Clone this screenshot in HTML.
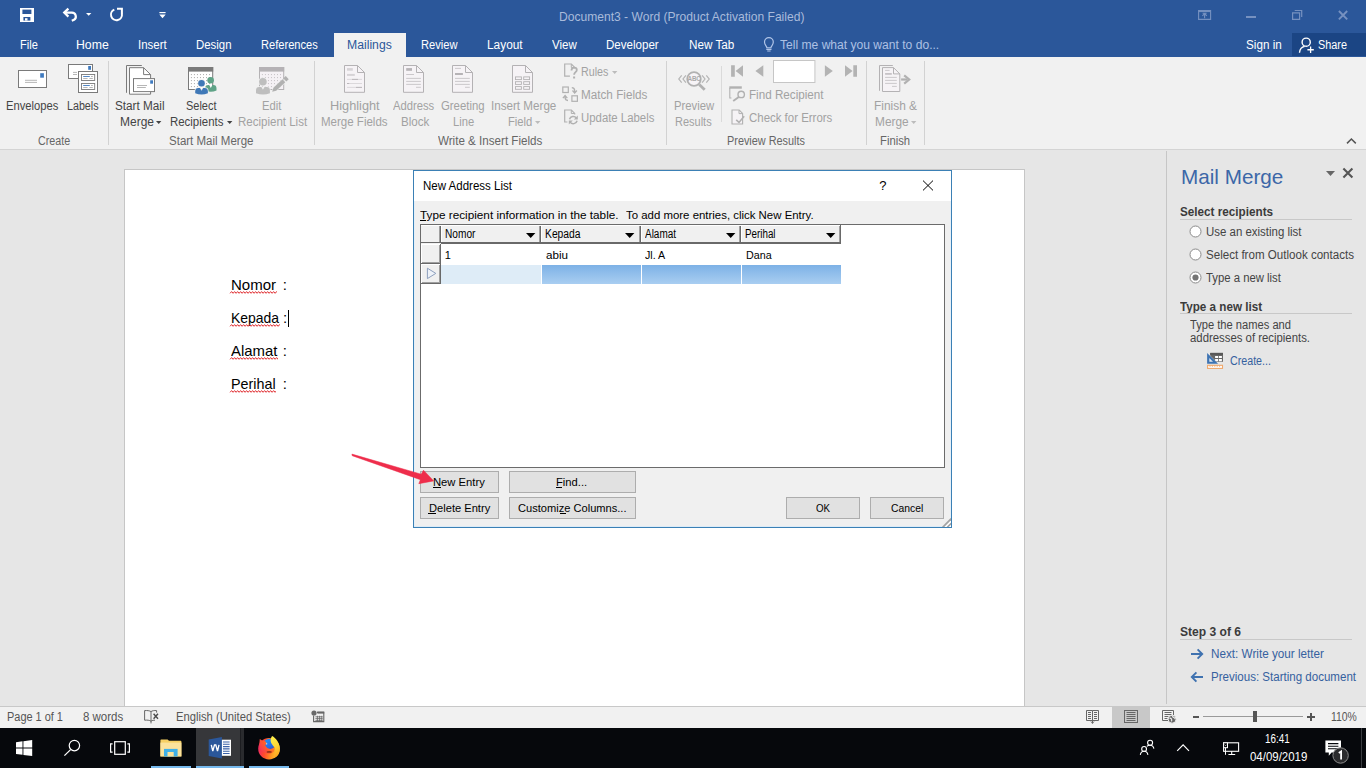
<!DOCTYPE html>
<html><head><meta charset="utf-8"><title>Word</title>
<style>
html,body{margin:0;padding:0;}
body{width:1366px;height:768px;overflow:hidden;position:relative;background:#e6e6e6;font-family:"Liberation Sans",sans-serif;}
.b{position:absolute;display:block;}
.t{position:absolute;white-space:pre;line-height:1;transform-origin:0 0;font-family:"Liberation Sans",sans-serif;}
</style></head><body>
<!-- p_chrome -->
<div class="b" style="left:0px;top:0px;width:1366px;height:57px;background:#2b579a;"></div>
<div class="b" style="left:0px;top:57px;width:1366px;height:92px;background:#f1f1f1;"></div>
<div class="b" style="left:0px;top:149px;width:1366px;height:1px;background:#d4d4d4;"></div>
<div class="b" style="left:334px;top:33px;width:72px;height:24px;background:#f1f1f1;"></div>
<div class="b" style="left:1292px;top:33px;width:74px;height:23px;background:#1b4584;"></div>
<div class="t" style="left:20.00px;top:39px;font-size:12px;color:#ffffff;transform:scaleX(0.9209);">File</div>
<div class="t" style="left:76.20px;top:39px;font-size:12px;color:#ffffff;transform:scaleX(1.0235);">Home</div>
<div class="t" style="left:138.00px;top:39px;font-size:12px;color:#ffffff;transform:scaleX(0.9565);">Insert</div>
<div class="t" style="left:196.00px;top:39px;font-size:12px;color:#ffffff;transform:scaleX(0.9510);">Design</div>
<div class="t" style="left:261.30px;top:39px;font-size:12px;color:#ffffff;transform:scaleX(0.9245);">References</div>
<div class="t" style="left:421.30px;top:39px;font-size:12px;color:#ffffff;transform:scaleX(0.9292);">Review</div>
<div class="t" style="left:487.30px;top:39px;font-size:12px;color:#ffffff;transform:scaleX(0.9888);">Layout</div>
<div class="t" style="left:552.00px;top:39px;font-size:12px;color:#ffffff;transform:scaleX(0.9605);">View</div>
<div class="t" style="left:606.30px;top:39px;font-size:12px;color:#ffffff;transform:scaleX(0.9629);">Developer</div>
<div class="t" style="left:688.70px;top:39px;font-size:12px;color:#ffffff;transform:scaleX(0.9751);">New Tab</div>
<div class="t" style="left:1245.80px;top:39px;font-size:12px;color:#ffffff;transform:scaleX(0.9746);">Sign in</div>
<div class="t" style="left:1318.00px;top:39px;font-size:12px;color:#ffffff;transform:scaleX(0.9048);">Share</div>
<div class="t" style="left:347.40px;top:39px;font-size:12px;color:#2b579a;transform:scaleX(1.0172);">Mailings</div>
<div class="t" style="left:780.30px;top:39px;font-size:12px;color:#adc1e4;transform:scaleX(1.0072);">Tell me what you want to do...</div>
<div class="t" style="left:558.60px;top:10px;font-size:13px;color:#a9bbdb;transform:scaleX(0.9289);">Document3 - Word (Product Activation Failed)</div>
<svg class="b" style="left:762px;top:36px;" width="14" height="16" viewBox="762 36 14 16"><path d="M766.900 47.900c0-1.700-2.400-2.700-2.400-5.800a4.400 4.400 0 0 1 8.800 0c0 3.100-2.400 4.100-2.400 5.800z" fill="none" stroke="#b1c5e8" stroke-width="1.200"/><path d="M766.300 49.500h5.200M767.200 51h3.400" stroke="#b1c5e8" stroke-width="1.100"/></svg>
<svg class="b" style="left:20px;top:8px;" width="14" height="14" viewBox="0 0 14 14"><path d="M0 0h14v14H0z" fill="#fff"/><path d="M2.4 1.6h9v4.4h-9z" fill="#2b579a"/><path d="M3.4 9h7v3.6h-7z" fill="#2b579a"/><path d="M5 10.2h2.5v2.4H5z" fill="#fff"/></svg>
<svg class="b" style="left:62px;top:6px;" width="17" height="17" viewBox="0 0 17 17"><path d="M2.4 6.6h7.6a3.9 3.9 0 0 1 2 7.2l-2.2 1" fill="none" stroke="#fff" stroke-width="2.2"/><path d="M6.4 2.6L2.2 6.6l4.2 4" fill="none" stroke="#fff" stroke-width="2.2"/></svg>
<svg class="b" style="left:86px;top:13px;" width="6" height="4" viewBox="0 0 6 4"><path d="M0 0h5.4L2.7 2.8z" fill="#fff"/></svg>
<svg class="b" style="left:108px;top:6px;" width="17" height="17" viewBox="0 0 17 17"><path d="M13.9 7.8A5.5 5.5 0 1 1 6.3 3.6" fill="none" stroke="#fff" stroke-width="2"/><path d="M9 2.8h4.9v5.2" fill="none" stroke="#fff" stroke-width="2"/></svg>
<svg class="b" style="left:159px;top:12px;" width="7" height="8" viewBox="0 0 7 8"><path d="M0.4 0.6h6.2" stroke="#fff" stroke-width="1.2"/><path d="M0.3 2.6h6.4L3.5 6.2z" fill="#fff"/></svg>
<svg class="b" style="left:1197px;top:9px;" width="15" height="12" viewBox="1197 9 15 12"><path d="M1198.600 10.600h12v8.800h-12z" fill="none" stroke="#7691c0" stroke-width="1.100"/><path d="M1198.600 11.200h12" stroke="#7691c0" stroke-width="1.800"/><path d="M1204.600 18.200v-4.200M1202.400 15.800l2.200-2.200 2.200 2.200M1202.600 13.300h4" fill="none" stroke="#7691c0" stroke-width="1.100"/></svg>
<div class="b" style="left:1246px;top:16px;width:10px;height:2px;background:#7691c0;"></div>
<svg class="b" style="left:1291px;top:9px;" width="13" height="12" viewBox="1291 9 13 12"><path d="M1294.700 10.500h7v6.600" fill="none" stroke="#7691c0" stroke-width="1.200"/><path d="M1292.600 12.800h7v6.600h-7z" fill="none" stroke="#7691c0" stroke-width="1.200"/></svg>
<svg class="b" style="left:1337px;top:9px;" width="13" height="12" viewBox="1337 9 13 12"><path d="M1338.900 11l8.300 8.400M1347.200 11l-8.300 8.400" stroke="#7691c0" stroke-width="1.900"/></svg>
<svg class="b" style="left:1297px;top:36px;" width="19" height="19" viewBox="1297 36 19 19"><circle cx="1306.200" cy="42.200" r="4.100" fill="none" stroke="#fff" stroke-width="1.400"/><path d="M1299.500 52.700c.3-3.500 2.300-5.700 5.200-6.300" fill="none" stroke="#fff" stroke-width="1.400"/><path d="M1310.600 46.600v6.300M1307.400 49.750h6.400" stroke="#fff" stroke-width="1.300"/></svg>
<!-- p_ribbon -->
<div class="b" style="left:108px;top:61px;width:1px;height:84px;background:#d2d2d2;"></div>
<div class="b" style="left:314px;top:61px;width:1px;height:84px;background:#d2d2d2;"></div>
<div class="b" style="left:666px;top:61px;width:1px;height:84px;background:#d2d2d2;"></div>
<div class="b" style="left:866px;top:61px;width:1px;height:84px;background:#d2d2d2;"></div>
<div class="b" style="left:924px;top:61px;width:1px;height:84px;background:#d2d2d2;"></div>
<div class="b" style="left:721px;top:66px;width:1px;height:56px;background:#dadada;"></div>
<div class="t" style="left:6.30px;top:100px;font-size:12px;color:#444444;transform:scaleX(0.9331);">Envelopes</div>
<div class="t" style="left:66.80px;top:100px;font-size:12px;color:#444444;transform:scaleX(0.8922);">Labels</div>
<div class="t" style="left:115.20px;top:100px;font-size:12px;color:#444444;transform:scaleX(0.9773);">Start Mail</div>
<div class="t" style="left:119.50px;top:116px;font-size:12px;color:#444444;transform:scaleX(0.9981);">Merge</div>
<div class="t" style="left:186.20px;top:100px;font-size:12px;color:#444444;transform:scaleX(0.9140);">Select</div>
<div class="t" style="left:170.30px;top:116px;font-size:12px;color:#444444;transform:scaleX(0.9528);">Recipients</div>
<div class="t" style="left:262.40px;top:100px;font-size:12px;color:#a2a2a2;transform:scaleX(0.9340);">Edit</div>
<div class="t" style="left:237.80px;top:116px;font-size:12px;color:#a2a2a2;transform:scaleX(0.9595);">Recipient List</div>
<div class="t" style="left:330.30px;top:100px;font-size:12px;color:#a2a2a2;transform:scaleX(1.0623);">Highlight</div>
<div class="t" style="left:321.40px;top:116px;font-size:12px;color:#a2a2a2;transform:scaleX(0.9601);">Merge Fields</div>
<div class="t" style="left:393.40px;top:100px;font-size:12px;color:#a2a2a2;transform:scaleX(0.9353);">Address</div>
<div class="t" style="left:400.70px;top:116px;font-size:12px;color:#a2a2a2;transform:scaleX(0.9654);">Block</div>
<div class="t" style="left:440.60px;top:100px;font-size:12px;color:#a2a2a2;transform:scaleX(0.9460);">Greeting</div>
<div class="t" style="left:452.70px;top:116px;font-size:12px;color:#a2a2a2;transform:scaleX(0.9347);">Line</div>
<div class="t" style="left:490.70px;top:100px;font-size:12px;color:#a2a2a2;transform:scaleX(0.9699);">Insert Merge</div>
<div class="t" style="left:507.70px;top:116px;font-size:12px;color:#a2a2a2;transform:scaleX(0.9368);">Field</div>
<div class="t" style="left:673.60px;top:100px;font-size:12px;color:#a2a2a2;transform:scaleX(0.9408);">Preview</div>
<div class="t" style="left:675.40px;top:116px;font-size:12px;color:#a2a2a2;transform:scaleX(0.9158);">Results</div>
<div class="t" style="left:873.50px;top:100px;font-size:12px;color:#a2a2a2;transform:scaleX(0.9923);">Finish &amp;</div>
<div class="t" style="left:874.60px;top:116px;font-size:12px;color:#a2a2a2;transform:scaleX(0.9893);">Merge</div>
<svg class="b" style="left:155.8px;top:120.5px;" width="6" height="4" viewBox="0 0 6 4"><path d="M0 0h5.4L2.7 2.9z" fill="#444444"/></svg>
<svg class="b" style="left:226.7px;top:120.5px;" width="6" height="4" viewBox="0 0 6 4"><path d="M0 0h5.4L2.7 2.9z" fill="#444444"/></svg>
<svg class="b" style="left:534.8px;top:120.5px;" width="6" height="4" viewBox="0 0 6 4"><path d="M0 0h5.4L2.7 2.9z" fill="#bcbcbc"/></svg>
<svg class="b" style="left:911px;top:120.5px;" width="6" height="4" viewBox="0 0 6 4"><path d="M0 0h5.4L2.7 2.9z" fill="#bcbcbc"/></svg>
<div class="t" style="left:581.40px;top:66px;font-size:12px;color:#a2a2a2;transform:scaleX(0.8917);">Rules</div>
<svg class="b" style="left:611.8px;top:70.5px;" width="6" height="4" viewBox="0 0 6 4"><path d="M0 0h5.4L2.7 2.9z" fill="#bcbcbc"/></svg>
<div class="t" style="left:581.40px;top:89px;font-size:12px;color:#a2a2a2;transform:scaleX(0.9757);">Match Fields</div>
<div class="t" style="left:581.40px;top:112px;font-size:12px;color:#a2a2a2;transform:scaleX(0.9483);">Update Labels</div>
<div class="t" style="left:748.50px;top:89px;font-size:12px;color:#a2a2a2;transform:scaleX(0.9713);">Find Recipient</div>
<div class="t" style="left:748.50px;top:112px;font-size:12px;color:#a2a2a2;transform:scaleX(0.9534);">Check for Errors</div>
<div class="t" style="left:37.50px;top:135px;font-size:12px;color:#666666;transform:scaleX(0.8913);">Create</div>
<div class="t" style="left:169.00px;top:135px;font-size:12px;color:#666666;transform:scaleX(0.9592);">Start Mail Merge</div>
<div class="t" style="left:438.10px;top:135px;font-size:12px;color:#666666;transform:scaleX(0.9678);">Write &amp; Insert Fields</div>
<div class="t" style="left:727.40px;top:135px;font-size:12px;color:#666666;transform:scaleX(0.9065);">Preview Results</div>
<div class="t" style="left:880.30px;top:135px;font-size:12px;color:#666666;transform:scaleX(0.9392);">Finish</div>
<svg class="b" style="left:1346px;top:137px;" width="11" height="8" viewBox="0 0 11 8"><path d="M1 6.4l4.4-4.4 4.4 4.4" fill="none" stroke="#555" stroke-width="1.5"/></svg>
<!-- p_ribicons -->
<svg class="b" style="left:0;top:57px" width="1366" height="92" viewBox="0 57 1366 92"><rect x="18.5" y="70.5" width="28" height="17" fill="#fff" stroke="#7a7a7a"/>
<rect x="40.2" y="73.2" width="3.7" height="4.5" fill="#3f7abf"/>
<path d="M25 80.3h12M25 82.4h12" stroke="#a3a3a3" stroke-width=".8"/>
<rect x="68.5" y="64.5" width="24" height="14" fill="#fff" stroke="#7a7a7a"/>
<rect x="88.2" y="66" width="2.8" height="3.8" fill="#3f7abf"/>
<path d="M73 72.4h4M73 74.5h4" stroke="#a3a3a3" stroke-width=".8"/>
<rect x="78.5" y="71.5" width="19" height="21" fill="#fff" stroke="#7a7a7a"/>
<rect x="81.5" y="74.5" width="13.2" height="6" fill="#fff" stroke="#7a7a7a" stroke-width=".9"/>
<path d="M83.2 76.5h6.6" stroke="#3f7abf" stroke-width=".9"/><path d="M91 76.5h1.8" stroke="#a3a3a3" stroke-width=".8"/>
<path d="M83.2 78.5h4.4M89.4 78.5h3.4" stroke="#a3a3a3" stroke-width=".8"/>
<rect x="81.5" y="83.5" width="13.2" height="6" fill="#fff" stroke="#7a7a7a" stroke-width=".9"/>
<path d="M83.2 85.5h6.6" stroke="#3f7abf" stroke-width=".9"/><path d="M91 85.5h1.8" stroke="#a3a3a3" stroke-width=".8"/>
<path d="M83.2 87.5h4.4M89.4 87.5h3.4" stroke="#a3a3a3" stroke-width=".8"/>
<path d="M141.8 65.5H126.5V92.8" fill="none" stroke="#7a7a7a"/>
<path d="M129.5 67.7H143.6L150.6 74.6V94.2H129.5z" fill="#fff" stroke="#7a7a7a"/>
<path d="M143.6 67.7V74.6H150.6" fill="none" stroke="#7a7a7a"/>
<rect x="133.5" y="78.6" width="21" height="13" fill="#fff" stroke="#7a7a7a"/>
<rect x="150.2" y="80.3" width="2.8" height="3.4" fill="#3f7abf"/>
<path d="M137 85.5h10M137 87.5h8.8" stroke="#a3a3a3" stroke-width=".8"/>
<rect x="188.5" y="67.5" width="24.2" height="22" fill="#fff" stroke="#7a7a7a"/><rect x="188.0" y="67.0" width="25.2" height="4.6" fill="#7a7a7a"/><rect x="190.90" y="74.10" width="1" height="1" fill="#a8a8a8"/><rect x="193.92" y="74.10" width="1" height="1" fill="#a8a8a8"/><rect x="196.94" y="74.10" width="1" height="1" fill="#a8a8a8"/><rect x="199.96" y="74.10" width="1" height="1" fill="#a8a8a8"/><rect x="202.98" y="74.10" width="1" height="1" fill="#a8a8a8"/><rect x="206.00" y="74.10" width="1" height="1" fill="#a8a8a8"/><rect x="209.02" y="74.10" width="1" height="1" fill="#a8a8a8"/><rect x="190.90" y="77.10" width="1" height="1" fill="#a8a8a8"/><rect x="193.92" y="77.10" width="1" height="1" fill="#a8a8a8"/><rect x="196.94" y="77.10" width="1" height="1" fill="#a8a8a8"/><rect x="199.96" y="77.10" width="1" height="1" fill="#a8a8a8"/><rect x="202.98" y="77.10" width="1" height="1" fill="#a8a8a8"/><rect x="206.00" y="77.10" width="1" height="1" fill="#a8a8a8"/><rect x="209.02" y="77.10" width="1" height="1" fill="#a8a8a8"/><rect x="190.90" y="80.10" width="1" height="1" fill="#a8a8a8"/><rect x="193.92" y="80.10" width="1" height="1" fill="#a8a8a8"/><rect x="196.94" y="80.10" width="1" height="1" fill="#a8a8a8"/><rect x="199.96" y="80.10" width="1" height="1" fill="#a8a8a8"/><rect x="202.98" y="80.10" width="1" height="1" fill="#a8a8a8"/><rect x="206.00" y="80.10" width="1" height="1" fill="#a8a8a8"/><rect x="209.02" y="80.10" width="1" height="1" fill="#a8a8a8"/><rect x="190.90" y="83.10" width="1" height="1" fill="#a8a8a8"/><rect x="193.92" y="83.10" width="1" height="1" fill="#a8a8a8"/><rect x="196.94" y="83.10" width="1" height="1" fill="#a8a8a8"/><rect x="199.96" y="83.10" width="1" height="1" fill="#a8a8a8"/><rect x="202.98" y="83.10" width="1" height="1" fill="#a8a8a8"/><rect x="206.00" y="83.10" width="1" height="1" fill="#a8a8a8"/><rect x="209.02" y="83.10" width="1" height="1" fill="#a8a8a8"/><rect x="190.90" y="86.10" width="1" height="1" fill="#a8a8a8"/><rect x="193.92" y="86.10" width="1" height="1" fill="#a8a8a8"/><rect x="196.94" y="86.10" width="1" height="1" fill="#a8a8a8"/><rect x="199.96" y="86.10" width="1" height="1" fill="#a8a8a8"/><rect x="202.98" y="86.10" width="1" height="1" fill="#a8a8a8"/><rect x="206.00" y="86.10" width="1" height="1" fill="#a8a8a8"/><rect x="209.02" y="86.10" width="1" height="1" fill="#a8a8a8"/>
<circle cx="210.6" cy="80.3" r="3.3" fill="#5fa387"/><path d="M205.1 90.5V88.5Q205.1 85.1 208.29999999999998 85.1H209.20000000000002L210.8 87.89999999999999L212.4 85.1H213.3Q216.5 85.1 216.5 88.5V90.5Q210.8 92.9 205.1 90.5z" fill="#5fa387"/>
<circle cx="201.5" cy="83.3" r="3.3" fill="#3f78b7" stroke="#f1f1f1" stroke-width="1.4" paint-order="stroke"/><path d="M195.2 93.2V91.4Q195.2 88 198.39999999999998 88H199.95000000000002L201.55 90.8L203.15 88H204.70000000000002Q207.9 88 207.9 91.4V93.2Q201.55 95.60000000000001 195.2 93.2z" fill="#3f78b7" stroke="#f1f1f1" stroke-width="1.4" paint-order="stroke"/>
<rect x="259.5" y="67.5" width="24.2" height="22" fill="#f5f1f5" stroke="#b4b2b4"/><rect x="259.0" y="67.0" width="25.2" height="4.6" fill="#b5b2b5"/><rect x="261.90" y="74.10" width="1" height="1" fill="#c4c0c4"/><rect x="264.92" y="74.10" width="1" height="1" fill="#c4c0c4"/><rect x="267.94" y="74.10" width="1" height="1" fill="#c4c0c4"/><rect x="270.96" y="74.10" width="1" height="1" fill="#c4c0c4"/><rect x="273.98" y="74.10" width="1" height="1" fill="#c4c0c4"/><rect x="277.00" y="74.10" width="1" height="1" fill="#c4c0c4"/><rect x="280.02" y="74.10" width="1" height="1" fill="#c4c0c4"/><rect x="261.90" y="77.10" width="1" height="1" fill="#c4c0c4"/><rect x="264.92" y="77.10" width="1" height="1" fill="#c4c0c4"/><rect x="267.94" y="77.10" width="1" height="1" fill="#c4c0c4"/><rect x="270.96" y="77.10" width="1" height="1" fill="#c4c0c4"/><rect x="273.98" y="77.10" width="1" height="1" fill="#c4c0c4"/><rect x="277.00" y="77.10" width="1" height="1" fill="#c4c0c4"/><rect x="280.02" y="77.10" width="1" height="1" fill="#c4c0c4"/><rect x="261.90" y="80.10" width="1" height="1" fill="#c4c0c4"/><rect x="264.92" y="80.10" width="1" height="1" fill="#c4c0c4"/><rect x="267.94" y="80.10" width="1" height="1" fill="#c4c0c4"/><rect x="270.96" y="80.10" width="1" height="1" fill="#c4c0c4"/><rect x="273.98" y="80.10" width="1" height="1" fill="#c4c0c4"/><rect x="277.00" y="80.10" width="1" height="1" fill="#c4c0c4"/><rect x="280.02" y="80.10" width="1" height="1" fill="#c4c0c4"/><rect x="261.90" y="83.10" width="1" height="1" fill="#c4c0c4"/><rect x="264.92" y="83.10" width="1" height="1" fill="#c4c0c4"/><rect x="267.94" y="83.10" width="1" height="1" fill="#c4c0c4"/><rect x="270.96" y="83.10" width="1" height="1" fill="#c4c0c4"/><rect x="273.98" y="83.10" width="1" height="1" fill="#c4c0c4"/><rect x="277.00" y="83.10" width="1" height="1" fill="#c4c0c4"/><rect x="280.02" y="83.10" width="1" height="1" fill="#c4c0c4"/><rect x="261.90" y="86.10" width="1" height="1" fill="#c4c0c4"/><rect x="264.92" y="86.10" width="1" height="1" fill="#c4c0c4"/><rect x="267.94" y="86.10" width="1" height="1" fill="#c4c0c4"/><rect x="270.96" y="86.10" width="1" height="1" fill="#c4c0c4"/><rect x="273.98" y="86.10" width="1" height="1" fill="#c4c0c4"/><rect x="277.00" y="86.10" width="1" height="1" fill="#c4c0c4"/><rect x="280.02" y="86.10" width="1" height="1" fill="#c4c0c4"/>
<circle cx="262.9" cy="81.8" r="3.8" fill="#bebebe" stroke="#f1f1f1" stroke-width="1.4" paint-order="stroke"/><path d="M256 93.2V90.30000000000001Q256 86.9 259.2 86.9H261.34999999999997L262.95 89.7L264.55 86.9H266.7Q269.9 86.9 269.9 90.30000000000001V93.2Q262.95 95.60000000000001 256 93.2z" fill="#bebebe" stroke="#f1f1f1" stroke-width="1.4" paint-order="stroke"/>
<g transform="translate(272.2 91.7) rotate(-43)"><path d="M0 0L3.6 -2H16V2H3.6z" fill="#b1b1b1" stroke="#f1f1f1" stroke-width="1" paint-order="stroke"/><path d="M17.2 -2.2h3.4v4.4h-3.4z" fill="#b1b1b1"/></g>
<path d="M344.5 65.5H357.5L364.5 72.5V92.3H344.5z" fill="#f6f3f6" stroke="#b4b2b4"/><path d="M357.5 65.5V72.5H364.5" fill="none" stroke="#b4b2b4"/>
<rect x="347" y="68.1" width="5.8" height="2.6" fill="#d6d3d6"/><rect x="347" y="73.9" width="7.8" height="2" fill="#d6d3d6"/>
<path d="M347 79.4h15M347 83.5h15M347 87.4h15" stroke="#d4d1d4" stroke-width=".8"/>
<path d="M352 79.4h6M347 83.5h2.2M356 87.4h6" stroke="#bbb8bb" stroke-width="1"/>
<path d="M403.5 65.5H416.5L423.5 72.5V92.3H403.5z" fill="#f6f3f6" stroke="#b4b2b4"/><path d="M416.5 65.5V72.5H423.5" fill="none" stroke="#b4b2b4"/>
<rect x="406.2" y="68.1" width="5.8" height="2.7" fill="#b6b3b6"/>
<path d="M406.2 74.5h7.8M406.2 78.4h14.7M406.2 81.4h14.7M406.2 84.4h14.7M416 87.3h4.9" stroke="#c6c3c6" stroke-width=".9"/>
<path d="M452.5 65.5H465.5L472.5 72.5V92.3H452.5z" fill="#f6f3f6" stroke="#b4b2b4"/><path d="M465.5 65.5V72.5H472.5" fill="none" stroke="#b4b2b4"/>
<path d="M455 68.4h6" stroke="#c6c3c6" stroke-width=".9"/><rect x="455" y="73" width="7.9" height="2" fill="#b6b3b6"/>
<path d="M455 78.4h14.8M455 81.4h14.8M455 84.4h14.8M465 87.3h4.8" stroke="#c6c3c6" stroke-width=".9"/>
<path d="M512.5 65.5H525.5L532.5 72.5V92.3H512.5z" fill="#f6f3f6" stroke="#b4b2b4"/><path d="M525.5 65.5V72.5H532.5" fill="none" stroke="#b4b2b4"/>
<rect x="515.5" y="76.9" width="5.9" height="2.7" fill="none" stroke="#b4b2b4" stroke-width=".9"/>
<rect x="523.7" y="76.9" width="5.9" height="2.7" fill="none" stroke="#b4b2b4" stroke-width=".9"/>
<rect x="515.5" y="81.7" width="5.9" height="2.7" fill="none" stroke="#b4b2b4" stroke-width=".9"/>
<rect x="523.7" y="81.7" width="5.9" height="2.7" fill="none" stroke="#b4b2b4" stroke-width=".9"/>
<rect x="515.5" y="86.6" width="5.9" height="2.7" fill="none" stroke="#b4b2b4" stroke-width=".9"/>
<rect x="523.7" y="86.6" width="5.9" height="2.7" fill="none" stroke="#b4b2b4" stroke-width=".9"/>
<path d="M569.900 76.200H564.700V64H571.400L574.700 67.400V68.600" fill="none" stroke="#b1b1b1" stroke-width="1.200"/><path d="M571.300 64.200V67.500H574.500" fill="none" stroke="#b1b1b1" stroke-width="1"/>
<path d="M571.500 70.600c0-1.900 1.200-2.900 2.700-2.900 1.500 0 2.600.9 2.600 2.300 0 2.200-2.700 2.100-2.700 4.700" fill="none" stroke="#b1b1b1" stroke-width="1.800"/><rect x="573.100" y="76.500" width="2" height="2" fill="#b1b1b1"/>
<rect x="562.800" y="87" width="5.500" height="5.500" fill="none" stroke="#b1b1b1" stroke-width="1.200"/><rect x="571.900" y="95.800" width="5.500" height="5.500" fill="none" stroke="#b1b1b1" stroke-width="1.200"/>
<path d="M571.800 87.700q2.900 0 2.900 3.200V93M572.500 90.500l2.200 2.600 2.200-2.600" fill="none" stroke="#b1b1b1" stroke-width="1.300"/>
<path d="M568 100.500q-2.900 0-2.900-3.200V95.600M562.900 98.100l2.200-2.600 2.200 2.600" fill="none" stroke="#b1b1b1" stroke-width="1.300"/>
<path d="M567.400 122H564.700V110H571.400L574.700 113.400V114.400" fill="none" stroke="#b1b1b1" stroke-width="1.200"/><path d="M571.300 110.200V113.500H574.500" fill="none" stroke="#b1b1b1" stroke-width="1"/>
<path d="M569.500 119.300A3.900 3.900 0 0 1 576.400 118" fill="none" stroke="#b1b1b1" stroke-width="1.500"/><path d="M577.800 115.600V119.600H573.800z" fill="#b1b1b1"/>
<path d="M577.100 120.800A3.900 3.900 0 0 1 570.200 122.100" fill="none" stroke="#b1b1b1" stroke-width="1.500"/><path d="M568.800 124.500V120.500H572.800z" fill="#b1b1b1"/>
<circle cx="694" cy="79" r="6.800" fill="#f7f4f7" stroke="#b1b1b1" stroke-width="1.700"/><path d="M699.200 84.400l5.500 5.300" stroke="#b1b1b1" stroke-width="2.800"/>
<path d="M681.700 75.300l-2.900 3.700 2.900 3.700M685.900 75.300l-2.900 3.700 2.900 3.700M702.100 75.300l2.900 3.700-2.900 3.700M706.300 75.300l2.900 3.700-2.900 3.700" fill="none" stroke="#b4b4b4" stroke-width="1.200"/>
<text x="694.100" y="81" font-family="Liberation Sans,sans-serif" font-size="6.300" font-weight="bold" fill="#a9a9a9" text-anchor="middle" letter-spacing="-.2">ABC</text>
<path d="M731.100 65.200h3.700v11.500h-3.700zM743 65.200v11.500L735.600 71z" fill="#b3b3b3"/>
<path d="M763.300 65.200v11.500L755.400 71z" fill="#b3b3b3"/>
<rect x="773.500" y="60.500" width="41.400" height="22" fill="#fff" stroke="#c6c6c6"/>
<path d="M824.900 65.200v11.500L832.800 71z" fill="#b3b3b3"/>
<path d="M845 65.200v11.500L852.600 71zM853.300 65.200h3.700v11.500h-3.700z" fill="#b3b3b3"/>
<path d="M729.300 87.500h12.500" stroke="#b1b1b1" stroke-width="2.400"/><path d="M729.800 88v10h1.600" fill="none" stroke="#b1b1b1" stroke-width="1.100"/>
<circle cx="741.200" cy="94.400" r="3.200" fill="#f1f1f1" stroke="#b1b1b1" stroke-width="1.400"/><path d="M738.800 96.900l-5.600 4" stroke="#b1b1b1" stroke-width="1.900"/>
<path d="M732 110H739.200L742.600 113.400V124H732z" fill="#f6f3f6" stroke="#b1b1b1" stroke-width="1.100"/><path d="M739 110.200V113.600H742.400" fill="none" stroke="#b1b1b1" stroke-width="1"/>
<path d="M736.200 119.800l2.800 2.600 5.200-6.200" fill="none" stroke="#b1b1b1" stroke-width="1.600"/>
<path d="M892.8 65.5H879.5V90.8" fill="none" stroke="#b4b2b4"/>
<path d="M882.5 67.6H893.5L899.8 73.89999999999999V91.5H882.5z" fill="#f6f3f6" stroke="#b4b2b4"/><path d="M893.5 67.6V73.89999999999999H899.8" fill="none" stroke="#b4b2b4"/>
<path d="M885.1 70.4h4.5M885.1 77.4h11.7M885.1 80.4h11.7M885.1 83.4h11.7M892 86.4h4.8" stroke="#c6c3c6" stroke-width=".9"/><rect x="885.1" y="73" width="6.7" height="1.8" fill="#c6c3c6"/>
<path d="M901.1 78.4h6.4v2.2h-6.4z" fill="#b1b1b1"/><path d="M904.2 75.4l5 4.1-5 4.1" fill="none" stroke="#b1b1b1" stroke-width="2.2"/></svg>
<!-- p_doc -->
<div class="b" style="left:124px;top:169px;width:901px;height:538px;background:#fff;border:1px solid #c6c6c6;border-bottom:none;box-sizing:border-box;"></div>
<div class="t" style="left:230.60px;top:277px;font-size:15px;color:#000;transform:scaleX(1.0020);">Nomor</div>
<div class="t" style="left:282.70px;top:277px;font-size:15px;color:#000;transform:scaleX(1.0000);">:</div>
<svg class="b" style="left:229px;top:291px;" width="48" height="5" viewBox="229 291 48 5"><path d="M230.1 293.3 l1.5 -1.7 l1.5 1.7 l1.5 -1.7 l1.5 1.7 l1.5 -1.7 l1.5 1.7 l1.5 -1.7 l1.5 1.7 l1.5 -1.7 l1.5 1.7 l1.5 -1.7 l1.5 1.7 l1.5 -1.7 l1.5 1.7 l1.5 -1.7 l1.5 1.7 l1.5 -1.7 l1.5 1.7 l1.5 -1.7 l1.5 1.7 l1.5 -1.7 l1.5 1.7 l1.5 -1.7 l1.5 1.7 l1.5 -1.7 l1.5 1.7 l1.5 -1.7 l1.5 1.7 l1.5 -1.7 l1.5 1.7 l1.5 -1.7 l1.5 1.7" fill="none" stroke="#e02b2f" stroke-width="1"/></svg>
<div class="t" style="left:230.60px;top:310px;font-size:15px;color:#000;transform:scaleX(0.9294);">Kepada</div>
<div class="t" style="left:283.00px;top:310px;font-size:15px;color:#000;transform:scaleX(1.0000);">:</div>
<svg class="b" style="left:229px;top:324px;" width="51" height="5" viewBox="229 324 51 5"><path d="M230.1 326.3 l1.5 -1.7 l1.5 1.7 l1.5 -1.7 l1.5 1.7 l1.5 -1.7 l1.5 1.7 l1.5 -1.7 l1.5 1.7 l1.5 -1.7 l1.5 1.7 l1.5 -1.7 l1.5 1.7 l1.5 -1.7 l1.5 1.7 l1.5 -1.7 l1.5 1.7 l1.5 -1.7 l1.5 1.7 l1.5 -1.7 l1.5 1.7 l1.5 -1.7 l1.5 1.7 l1.5 -1.7 l1.5 1.7 l1.5 -1.7 l1.5 1.7 l1.5 -1.7 l1.5 1.7 l1.5 -1.7 l1.5 1.7 l1.5 -1.7 l1.5 1.7 l1.5 -1.7 l1.5 1.7" fill="none" stroke="#e02b2f" stroke-width="1"/></svg>
<div class="t" style="left:230.60px;top:343px;font-size:15px;color:#000;transform:scaleX(0.9924);">Alamat</div>
<div class="t" style="left:282.70px;top:343px;font-size:15px;color:#000;transform:scaleX(1.0000);">:</div>
<svg class="b" style="left:229px;top:357px;" width="49" height="5" viewBox="229 357 49 5"><path d="M230.1 359.3 l1.5 -1.7 l1.5 1.7 l1.5 -1.7 l1.5 1.7 l1.5 -1.7 l1.5 1.7 l1.5 -1.7 l1.5 1.7 l1.5 -1.7 l1.5 1.7 l1.5 -1.7 l1.5 1.7 l1.5 -1.7 l1.5 1.7 l1.5 -1.7 l1.5 1.7 l1.5 -1.7 l1.5 1.7 l1.5 -1.7 l1.5 1.7 l1.5 -1.7 l1.5 1.7 l1.5 -1.7 l1.5 1.7 l1.5 -1.7 l1.5 1.7 l1.5 -1.7 l1.5 1.7 l1.5 -1.7 l1.5 1.7 l1.5 -1.7 l1.5 1.7 l1.5 -1.7 l1.5 1.7" fill="none" stroke="#e02b2f" stroke-width="1"/></svg>
<div class="t" style="left:230.60px;top:376px;font-size:15px;color:#000;transform:scaleX(0.9558);">Perihal</div>
<div class="t" style="left:282.70px;top:376px;font-size:15px;color:#000;transform:scaleX(1.0000);">:</div>
<svg class="b" style="left:229px;top:390px;" width="47" height="5" viewBox="229 390 47 5"><path d="M230.1 392.3 l1.5 -1.7 l1.5 1.7 l1.5 -1.7 l1.5 1.7 l1.5 -1.7 l1.5 1.7 l1.5 -1.7 l1.5 1.7 l1.5 -1.7 l1.5 1.7 l1.5 -1.7 l1.5 1.7 l1.5 -1.7 l1.5 1.7 l1.5 -1.7 l1.5 1.7 l1.5 -1.7 l1.5 1.7 l1.5 -1.7 l1.5 1.7 l1.5 -1.7 l1.5 1.7 l1.5 -1.7 l1.5 1.7 l1.5 -1.7 l1.5 1.7 l1.5 -1.7 l1.5 1.7 l1.5 -1.7 l1.5 1.7 l1.5 -1.7 l1.5 1.7" fill="none" stroke="#e02b2f" stroke-width="1"/></svg>
<div class="b" style="left:288px;top:310px;width:1px;height:17px;background:#000;"></div>
<!-- p_pane -->
<div class="b" style="left:1166px;top:151px;width:1px;height:553px;background:#c6c6c6;"></div>
<div class="t" style="left:1180.60px;top:166px;font-size:21px;color:#3c67a8;transform:scaleX(0.9849);">Mail Merge</div>
<svg class="b" style="left:1326px;top:171px;" width="9" height="5" viewBox="0 0 9 5"><path d="M0 0h9L4.5 4.900z" fill="#666"/></svg>
<svg class="b" style="left:1342px;top:167px;" width="12" height="12" viewBox="0 0 12 12"><path d="M1.4 1.4l9 9M10.4 1.4l-9 9" stroke="#555" stroke-width="2.100"/></svg>
<div class="t" style="left:1179.90px;top:206px;font-size:12.5px;color:#3b3b3b;font-weight:bold;transform:scaleX(0.9367);">Select recipients</div>
<div class="b" style="left:1180px;top:219px;width:172px;height:1px;background:#c8c8c8;"></div>
<svg class="b" style="left:1189.1px;top:225.3px;" width="13" height="13" viewBox="0 0 13 13"><circle cx="6.5" cy="6.5" r="5.5" fill="#fff" stroke="#8a8a8a" stroke-width="1"/></svg>
<div class="t" style="left:1206.00px;top:226px;font-size:12px;color:#444444;transform:scaleX(0.9542);">Use an existing list</div>
<svg class="b" style="left:1189.1px;top:248.3px;" width="13" height="13" viewBox="0 0 13 13"><circle cx="6.5" cy="6.5" r="5.5" fill="#fff" stroke="#8a8a8a" stroke-width="1"/></svg>
<div class="t" style="left:1206.00px;top:249px;font-size:12px;color:#444444;transform:scaleX(0.9649);">Select from Outlook contacts</div>
<svg class="b" style="left:1189.1px;top:271.3px;" width="13" height="13" viewBox="0 0 13 13"><circle cx="6.5" cy="6.5" r="5.5" fill="#fff" stroke="#8a8a8a" stroke-width="1"/><circle cx="6.5" cy="6.5" r="3.1" fill="#747474"/></svg>
<div class="t" style="left:1206.00px;top:272px;font-size:12px;color:#444444;transform:scaleX(0.9440);">Type a new list</div>
<div class="t" style="left:1179.90px;top:301px;font-size:12.5px;color:#3b3b3b;font-weight:bold;transform:scaleX(0.9327);">Type a new list</div>
<div class="b" style="left:1180px;top:313px;width:172px;height:1px;background:#c8c8c8;"></div>
<div class="t" style="left:1189.50px;top:319px;font-size:12px;color:#444444;transform:scaleX(0.9288);">Type the names and</div>
<div class="t" style="left:1189.50px;top:332px;font-size:12px;color:#444444;transform:scaleX(0.9469);">addresses of recipients.</div>
<div class="t" style="left:1229.60px;top:355px;font-size:12px;color:#35619f;transform:scaleX(0.8896);">Create...</div>
<svg class="b" style="left:1206px;top:352px;" width="18" height="18" viewBox="0 0 18 18"><rect x="4.2" y=".9" width="12.8" height="8.9" fill="#676767"/><rect x="4.2" y=".9" width="12.8" height="2" fill="#585858"/><path d="M9.1 4.1h3v1.9h-3zM12.9 4.1h3v1.9h-3zM9.1 7h3v2.2h-3zM12.9 7h3v2.2h-3z" fill="#fff"/><path d="M1.1 .9V11.8H12.1z" fill="#3e74b3" stroke="#e6e6e6" stroke-width=".7" paint-order="stroke"/><path d="M3.3 6V9.7H7z" fill="#e1e8f0"/><rect x="1.6" y="13.3" width="14.9" height="3.1" fill="#fff" stroke="#f0a76a" stroke-width="1.1"/><path d="M4 13.4v1.4M6.4 13.4v1.4M8.8 13.4v1.4M11.2 13.4v1.4M13.6 13.4v1.4" stroke="#f0a76a" stroke-width=".9"/></svg>
<div class="t" style="left:1179.90px;top:626px;font-size:12.5px;color:#3b3b3b;font-weight:bold;transform:scaleX(0.9658);">Step 3 of 6</div>
<div class="b" style="left:1180px;top:639px;width:172px;height:1px;background:#c8c8c8;"></div>
<svg class="b" style="left:1190px;top:648px;" width="14" height="12" viewBox="0 0 14 12"><path d="M1 6h11M7.6 1.4L12.2 6l-4.6 4.6" fill="none" stroke="#3f72b0" stroke-width="1.9"/></svg>
<svg class="b" style="left:1190px;top:671px;" width="14" height="12" viewBox="0 0 14 12"><path d="M13 6H2M6.4 1.4L1.8 6l4.6 4.6" fill="none" stroke="#3f72b0" stroke-width="1.9"/></svg>
<div class="t" style="left:1211.00px;top:648px;font-size:12px;color:#35619f;transform:scaleX(0.9757);">Next: Write your letter</div>
<div class="t" style="left:1211.00px;top:671px;font-size:12px;color:#35619f;transform:scaleX(0.9620);">Previous: Starting document</div>
<!-- p_dialog -->
<div class="b" style="left:413px;top:170px;width:539px;height:358px;background:#f0f0f0;border:1px solid #3b80b5;box-sizing:border-box;"></div>
<div class="b" style="left:414px;top:201px;width:1px;height:326px;background:#e4eff8;"></div>
<div class="b" style="left:950px;top:201px;width:1px;height:326px;background:#e4eff8;"></div>
<div class="b" style="left:414px;top:526px;width:537px;height:1px;background:#dcebf7;"></div>
<div class="b" style="left:414px;top:171px;width:537px;height:30px;background:#fff;"></div>
<div class="t" style="left:422.80px;top:180px;font-size:12px;color:#000;transform:scaleX(0.9593);">New Address List</div>
<div class="t" style="left:879.26px;top:179px;font-size:13px;color:#000;transform:scaleX(1.0000);">?</div>
<svg class="b" style="left:922px;top:180px;" width="12" height="11" viewBox="0 0 12 11"><path d="M1 .6l10 9.800M11 .6L1 10.400" stroke="#000" stroke-width="1"/></svg>
<div class="t" style="left:420.40px;top:210px;font-size:11px;color:#000;transform:scaleX(1.0682);">Type recipient information in the table.</div>
<div class="t" style="left:625.60px;top:210px;font-size:11px;color:#000;transform:scaleX(1.0379);">To add more entries, click New Entry.</div>
<div class="b" style="left:420px;top:220px;width:6px;height:1px;background:#000;"></div>
<div class="b" style="left:420px;top:224px;width:525px;height:244px;background:#fff;border:1px solid #6b6b6b;box-sizing:border-box;"></div>
<div class="b" style="left:421px;top:225px;width:420px;height:18px;background:#f0f0f0;"></div>
<div class="b" style="left:441px;top:243px;width:400px;height:1px;background:#696969;"></div>
<div class="b" style="left:421px;top:243px;width:20px;height:1px;background:#f0f0f0;"></div>
<div class="b" style="left:421px;top:242px;width:420px;height:1px;background:#696969;"></div>
<div class="b" style="left:440px;top:225px;width:1px;height:18px;background:#696969;"></div>
<div class="b" style="left:439px;top:226px;width:1px;height:16px;background:#a0a0a0;"></div>
<div class="b" style="left:441px;top:225px;width:1px;height:17px;background:#ffffff;"></div>
<div class="b" style="left:540px;top:225px;width:1px;height:18px;background:#696969;"></div>
<div class="b" style="left:539px;top:226px;width:1px;height:16px;background:#a0a0a0;"></div>
<div class="b" style="left:541px;top:225px;width:1px;height:17px;background:#ffffff;"></div>
<div class="b" style="left:640px;top:225px;width:1px;height:18px;background:#696969;"></div>
<div class="b" style="left:639px;top:226px;width:1px;height:16px;background:#a0a0a0;"></div>
<div class="b" style="left:641px;top:225px;width:1px;height:17px;background:#ffffff;"></div>
<div class="b" style="left:740px;top:225px;width:1px;height:18px;background:#696969;"></div>
<div class="b" style="left:739px;top:226px;width:1px;height:16px;background:#a0a0a0;"></div>
<div class="b" style="left:741px;top:225px;width:1px;height:17px;background:#ffffff;"></div>
<div class="b" style="left:840px;top:225px;width:1px;height:18px;background:#696969;"></div>
<div class="b" style="left:839px;top:226px;width:1px;height:16px;background:#a0a0a0;"></div>
<div class="b" style="left:421px;top:225px;width:419px;height:1px;background:#ffffff;"></div>
<div class="t" style="left:445.40px;top:228px;font-size:12px;color:#000;transform:scaleX(0.8442);">Nomor</div>
<svg class="b" style="left:526px;top:233px;" width="10" height="6" viewBox="0 0 10 6"><path d="M0 0h9.400L4.700 4.900z" fill="#000"/></svg>
<div class="t" style="left:444.72px;top:250px;font-size:11px;color:#000;transform:scaleX(1.0000);">1</div>
<div class="t" style="left:545.40px;top:228px;font-size:12px;color:#000;transform:scaleX(0.8598);">Kepada</div>
<svg class="b" style="left:625.4px;top:233px;" width="10" height="6" viewBox="0 0 10 6"><path d="M0 0h9.400L4.700 4.900z" fill="#000"/></svg>
<div class="t" style="left:545.60px;top:250px;font-size:11px;color:#000;transform:scaleX(1.0581);">abiu</div>
<div class="t" style="left:645.00px;top:228px;font-size:12px;color:#000;transform:scaleX(0.8304);">Alamat</div>
<svg class="b" style="left:725.6px;top:233px;" width="10" height="6" viewBox="0 0 10 6"><path d="M0 0h9.400L4.700 4.900z" fill="#000"/></svg>
<div class="t" style="left:645.40px;top:250px;font-size:11px;color:#000;transform:scaleX(0.9711);">Jl. A</div>
<div class="t" style="left:745.30px;top:228px;font-size:12px;color:#000;transform:scaleX(0.8171);">Perihal</div>
<svg class="b" style="left:826px;top:233px;" width="10" height="6" viewBox="0 0 10 6"><path d="M0 0h9.400L4.700 4.900z" fill="#000"/></svg>
<div class="t" style="left:745.80px;top:250px;font-size:11px;color:#000;transform:scaleX(0.9737);">Dana</div>
<div class="b" style="left:421px;top:244px;width:19px;height:19px;background:#f0f0f0;border-right:1px solid #696969;border-bottom:1px solid #696969;box-shadow:inset 1px 1px 0 #fff,inset -1px -1px 0 #a0a0a0;"></div>
<div class="b" style="left:421px;top:264px;width:19px;height:19px;background:#f0f0f0;border-right:1px solid #696969;border-bottom:1px solid #696969;box-shadow:inset 1px 1px 0 #fff,inset -1px -1px 0 #a0a0a0;"></div>
<svg class="b" style="left:426px;top:267px;" width="11" height="13" viewBox="0 0 11 13"><path d="M1.400 1.200v10.400L9.800 6.400z" fill="#eef2f8" stroke="#8d9fbd" stroke-width="1"/></svg>
<div class="b" style="left:441px;top:265px;width:100px;height:19px;background:#deecf7;"></div>
<div class="b" style="left:542px;top:265px;width:99px;height:19px;background:linear-gradient(#7db1e6,#a9cef1);"></div>
<div class="b" style="left:642px;top:265px;width:99px;height:19px;background:linear-gradient(#7db1e6,#a9cef1);"></div>
<div class="b" style="left:742px;top:265px;width:99px;height:19px;background:linear-gradient(#7db1e6,#a9cef1);"></div>
<div class="b" style="left:420px;top:471px;width:79px;height:22px;background:#e1e1e1;border:1px solid #adadad;box-sizing:border-box;"></div>
<div class="b" style="left:509px;top:471px;width:127px;height:22px;background:#e1e1e1;border:1px solid #adadad;box-sizing:border-box;"></div>
<div class="b" style="left:420px;top:497px;width:79px;height:22px;background:#e1e1e1;border:1px solid #adadad;box-sizing:border-box;"></div>
<div class="b" style="left:509px;top:497px;width:127px;height:22px;background:#e1e1e1;border:1px solid #adadad;box-sizing:border-box;"></div>
<div class="b" style="left:786px;top:497px;width:74px;height:22px;background:#e1e1e1;border:1px solid #adadad;box-sizing:border-box;"></div>
<div class="b" style="left:870px;top:497px;width:74px;height:22px;background:#e1e1e1;border:1px solid #adadad;box-sizing:border-box;"></div>
<div class="t" style="left:433.20px;top:477px;font-size:11px;color:#000;transform:scaleX(1.0212);">New Entry</div>
<div class="b" style="left:433px;top:487px;width:8px;height:1px;background:#000;"></div>
<div class="t" style="left:556.20px;top:477px;font-size:11px;color:#000;transform:scaleX(1.0198);">Find...</div>
<div class="b" style="left:556px;top:487px;width:6px;height:1px;background:#000;"></div>
<div class="t" style="left:428.50px;top:503px;font-size:11px;color:#000;transform:scaleX(1.0115);">Delete Entry</div>
<div class="b" style="left:428px;top:513px;width:8px;height:1px;background:#000;"></div>
<div class="t" style="left:517.80px;top:503px;font-size:11px;color:#000;transform:scaleX(1.0085);">Customize Columns...</div>
<div class="b" style="left:560px;top:513px;width:6px;height:1px;background:#000;"></div>
<div class="t" style="left:815.80px;top:503px;font-size:11px;color:#000;transform:scaleX(0.8831);">OK</div>
<div class="t" style="left:890.90px;top:503px;font-size:11px;color:#000;transform:scaleX(0.9409);">Cancel</div>
<svg class="b" style="left:941px;top:517px;" width="10" height="10" viewBox="0 0 10 10"><path d="M10.300 1.700L1.700 10.300" stroke="#a3a3a3" stroke-width="1.900"/><path d="M10.300 4.300L4.300 10.300" stroke="#fff" stroke-width="1.500"/><path d="M10.300 6.300L6.300 10.300" stroke="#a3a3a3" stroke-width="1.700"/><path d="M10.300 8.600L8.600 10.300" stroke="#fff" stroke-width="1.300"/></svg>
<svg class="b" style="left:345px;top:448px;" width="95" height="42" viewBox="345 448 95 42"><path d="M351.900 454.100L421.200 474.200L423.500 470.200L433.700 480.900L418.800 483.700L420.400 479.700L352.200 455.700z" fill="#ee2d4b" stroke="#ee2d4b" stroke-width=".5" stroke-linejoin="round"/></svg>
<!-- p_status -->
<div class="b" style="left:0px;top:706px;width:1366px;height:22px;background:#f1f1f1;"></div>
<div class="b" style="left:0px;top:706px;width:1366px;height:1px;background:#c8c8c8;"></div>
<div class="t" style="left:7.40px;top:711px;font-size:12px;color:#555555;transform:scaleX(0.9114);">Page 1 of 1</div>
<div class="t" style="left:83.20px;top:711px;font-size:12px;color:#555555;transform:scaleX(0.9568);">8 words</div>
<div class="t" style="left:175.50px;top:711px;font-size:12px;color:#555555;transform:scaleX(0.9359);">English (United States)</div>
<svg class="b" style="left:144px;top:709px;" width="16" height="15" viewBox="0 0 16 15"><path d="M7 2.600C5.600 1.600 3 1.400.6 1.600v9.600c2.400-.2 5-.100 6.400 1zM7 2.600C8.200 1.700 10.200 1.400 12.600 1.600v2M7 12.200c1.200-.9 2.600-1.100 4-1" fill="none" stroke="#666" stroke-width="1"/><path d="M7 12v2.400" stroke="#666" stroke-width="1"/><path d="M9.600 4.800l4.400 5M14 4.800l-4.400 5" stroke="#4a4a4a" stroke-width="1.400"/></svg>
<svg class="b" style="left:311px;top:710px;" width="14" height="13" viewBox="0 0 14 13"><path d="M2.600 5.600v6h10.200V2.400H6" fill="none" stroke="#666" stroke-width="1.100"/><path d="M6.400 2.600h6.800" stroke="#666" stroke-width="2"/><path d="M4.400 6.800h7.200M4.400 8.600h7.200M4.400 10.400h7.200M6.400 5.800v5.400M8.600 5.800v5.400M10.800 5.800v5.400" stroke="#666" stroke-width=".8"/><circle cx="3" cy="3" r="2.600" fill="#6a6a6a"/></svg>
<div class="b" style="left:1112px;top:707px;width:38px;height:21px;background:#c8c8c8;"></div>
<svg class="b" style="left:1085px;top:709px;" width="16" height="16" viewBox="0 0 16 16"><path d="M7.500 1.500H1.500V11.500H7.500M7.500 1.500H13.500V11.500H7.500" fill="none" stroke="#666" stroke-width="1"/><path d="M7.500 1.500V14.500M6 12.500l1.500 1.800 1.500-1.800" fill="none" stroke="#666" stroke-width="1"/><path d="M3 3.500h3M3 5.500h3M3 7.500h3M3 9.500h3M9 3.500h3M9 5.500h3M9 7.500h3M9 9.500h3" stroke="#666" stroke-width="1"/></svg>
<svg class="b" style="left:1123px;top:710px;" width="16" height="14" viewBox="0 0 16 14"><rect x="1.500" y=".5" width="13" height="12" fill="none" stroke="#666" stroke-width="1"/><path d="M3.500 2.500h9M3.500 4.500h9M3.500 6.500h9M3.500 8.500h9M3.500 10.500h9" stroke="#666" stroke-width="1"/></svg>
<svg class="b" style="left:1161px;top:709px;" width="18" height="16" viewBox="0 0 18 16"><path d="M8 11.500H1.500V1.500H12.500V6" fill="none" stroke="#666" stroke-width="1"/><path d="M3.500 3.500h7M3.500 5.500h7M3.500 7.500h4M3.500 9.500h3" stroke="#666" stroke-width="1"/><circle cx="11.100" cy="10.200" r="4" fill="#666" stroke="#f1f1f1" stroke-width="1"/><path d="M8.400 9.200c1-.4 1.600.2 2.200 1 .4.600.2 1.400-.4 2.200M11.400 7.200c.2.800.8 1.200 1.600 1.400.6.200 1 .8 1 1.600" stroke="#f1f1f1" stroke-width="1.100" fill="none"/></svg>
<div class="b" style="left:1193px;top:716px;width:6px;height:2px;background:#555;"></div>
<div class="b" style="left:1203px;top:716px;width:100px;height:1px;background:#9a9a9a;"></div>
<div class="b" style="left:1253px;top:711px;width:4px;height:11px;background:#555;"></div>
<div class="b" style="left:1307px;top:716px;width:8px;height:2px;background:#555;"></div>
<div class="b" style="left:1310px;top:713px;width:2px;height:8px;background:#555;"></div>
<div class="t" style="left:1330.80px;top:711px;font-size:12px;color:#555555;transform:scaleX(0.8666);">110%</div>
<!-- p_taskbar -->
<div class="b" style="left:0px;top:728px;width:1366px;height:40px;background:#06080c;"></div>
<div class="b" style="left:196px;top:728px;width:44px;height:38px;background:#36373a;"></div>
<div class="b" style="left:240px;top:728px;width:4px;height:38px;background:#2a2b2e;"></div>
<div class="b" style="left:240px;top:728px;width:1px;height:38px;background:#1c1d20;"></div>
<div class="b" style="left:151px;top:766px;width:40px;height:2px;background:#76b9ed;"></div>
<div class="b" style="left:196px;top:766px;width:48px;height:2px;background:#76b9ed;"></div>
<div class="b" style="left:249px;top:766px;width:40px;height:2px;background:#76b9ed;"></div>
<svg class="b" style="left:16px;top:740px;" width="17" height="17" viewBox="0 0 17 17"><path d="M0 2.200L6.500 1.300V7.600H0zM7.400 1.200L16.200 0V7.600H7.400zM0 8.500H6.500V14.800L0 13.900zM7.400 8.500H16.200V16.100L7.400 14.900z" fill="#fff"/></svg>
<svg class="b" style="left:63px;top:738px;" width="18" height="19" viewBox="0 0 18 19"><circle cx="11.400" cy="7.600" r="5.200" fill="none" stroke="#fff" stroke-width="1.200"/><path d="M7.600 11.600L1.400 17.600" stroke="#fff" stroke-width="1.300"/></svg>
<svg class="b" style="left:109px;top:740px;" width="22" height="16" viewBox="0 0 22 16"><rect x="5.700" y="1.700" width="10.600" height="12.600" fill="none" stroke="#fff" stroke-width="1.200"/><path d="M3.600 3.900H1.600v8.200H3.600M18.400 3.900h2v8.200h-2" fill="none" stroke="#fff" stroke-width="1.200"/></svg>
<svg class="b" style="left:160px;top:739px;" width="22" height="18" viewBox="0 0 22 18"><path d="M.4 1.400c0-.6.400-1 1-1h6.200l1.400 1.400h11.400c.6 0 1 .4 1 1V17.400H.4z" fill="#f6cf63"/><path d="M.4 3.600h21v13.800H.4z" fill="#fbe29c"/><path d="M4 9.900h13.600v7.500H4z" fill="#3fb0e8"/><path d="M7.500 13h6.200v4.400H7.500z" fill="#fbe29c"/></svg>
<svg class="b" style="left:207px;top:737px;" width="25" height="22" viewBox="0 0 25 22"><path d="M14 2.700h10v16.100H14z" fill="#fff"/><path d="M16 5h6.600M16 7.300h6.600M16 9.600h6.600M16 11.900h6.600M16 14.200h6.600M16 16.500h6.600" stroke="#3b62a8" stroke-width="1.100"/><path d="M1.700 2.600L14.900 0v21.500L1.700 19z" fill="#2b579a"/><path d="M4.300 7.900l1.500 6.200 1.700-6.200h1.300l1.700 6.200 1.500-6.200" fill="none" stroke="#fff" stroke-width="1.350" stroke-linejoin="miter"/></svg>
<svg class="b" style="left:256px;top:735px;" width="26" height="26" viewBox="256 735 26 26"><defs><linearGradient id="ff" x1="0" y1=".45" x2="1" y2=".55"><stop offset="0" stop-color="#ee2a63"/><stop offset=".3" stop-color="#ff4a2c"/><stop offset=".62" stop-color="#ff9420"/><stop offset="1" stop-color="#ffd23a"/></linearGradient><linearGradient id="fg" x1=".3" y1="0" x2=".8" y2="1"><stop offset="0" stop-color="#1b93f7"/><stop offset=".6" stop-color="#2a6fe6"/><stop offset="1" stop-color="#3b46b8"/></linearGradient><linearGradient id="fy" x1="0" y1="0" x2=".3" y2="1"><stop offset="0" stop-color="#fff450"/><stop offset=".6" stop-color="#ffd634"/><stop offset="1" stop-color="#ffa81f"/></linearGradient><linearGradient id="fo" x1="1" y1=".2" x2="0" y2=".8"><stop offset="0" stop-color="#ff9a20"/><stop offset=".55" stop-color="#ff5a2c"/><stop offset="1" stop-color="#f2335c"/></linearGradient></defs><circle cx="269" cy="748.700" r="10.800" fill="url(#ff)"/><circle cx="269.300" cy="744.600" r="5.800" fill="url(#fg)"/><path d="M272.100 736.100C275.800 738 279.600 742.500 279.800 748.700C279.800 751 279.200 753.200 278 755.100C276 757.600 274.500 757.800 273.500 757.400C276.500 754.600 276.200 750.200 274.200 747.200C272.600 744.600 270.200 742.800 270.700 739.400C270.900 738.200 271.400 737 272.100 736.100z" fill="url(#fy)"/><path d="M259.800 738.900L262.500 740.700Q265.600 740.400 266.500 742.900L265.200 745.600Q266.400 748.400 270 748.900Q273 749.100 274.500 747.100Q275.400 752.300 270.600 753.600Q263.400 754.400 260.300 748.600Q258.600 743.600 259.800 738.900z" fill="url(#fo)"/><ellipse cx="269.200" cy="751.900" rx="2.700" ry=".9" fill="#6a230e" opacity=".75"/><path d="M266.300 742.600l1.300 1.400-1.600.8z" fill="#ffe9c9" opacity=".8"/></svg>
<svg class="b" style="left:1139px;top:739px;" width="17" height="17" viewBox="0 0 17 17"><circle cx="11.100" cy="3.700" r="2.500" fill="none" stroke="#fff" stroke-width="1.100"/><path d="M7.900 7.400c.6-.8 1.600-1.200 3.200-1.200 2.200 0 3.400 1.200 3.800 3.400" fill="none" stroke="#fff" stroke-width="1.100"/><circle cx="5.100" cy="9.900" r="2.400" fill="#06080c" stroke="#fff" stroke-width="1.100"/><path d="M1.300 15.800c.4-2.300 1.700-3.500 3.800-3.500s3.400 1.200 3.800 3.500" fill="none" stroke="#fff" stroke-width="1.100"/></svg>
<svg class="b" style="left:1176px;top:743px;" width="15" height="10" viewBox="0 0 15 10"><path d="M1.200 7.800L7.100 1.900l5.900 5.900" fill="none" stroke="#fff" stroke-width="1.200"/></svg>
<svg class="b" style="left:1222px;top:741px;" width="18" height="15" viewBox="0 0 18 15"><rect x="1.600" y="1.800" width="15" height="8.500" fill="none" stroke="#fff" stroke-width="1.100"/><rect x="1.600" y="1.800" width="3.900" height="4.900" fill="#06080c" stroke="#fff" stroke-width="1"/><path d="M2.700 3.700l.9.900.9-.9" stroke="#fff" stroke-width=".7" fill="none"/><path d="M3.500 6.700v7.100" stroke="#fff" stroke-width="1"/><path d="M9.700 10.300v3M6.400 13.500h6.800" stroke="#fff" stroke-width="1.100"/></svg>
<div class="t" style="left:1265.20px;top:733px;font-size:12px;color:#fff;transform:scaleX(0.8199);">16:41</div>
<div class="t" style="left:1249.50px;top:751px;font-size:12px;color:#fff;transform:scaleX(0.9548);">04/09/2019</div>
<svg class="b" style="left:1324px;top:739px;" width="28" height="28" viewBox="0 0 28 28"><path d="M1.400 1.400h15.600v12.200H7.600L4.800 16.800v-3.200H1.400z" fill="#fff"/><path d="M4 4.600h10.400M4 7.200h10.400M4 9.800h10.400" stroke="#06080c" stroke-width="1.100"/><circle cx="16.600" cy="16.500" r="7.700" fill="#2b2b2d" stroke="#8c8c8c" stroke-width="1"/><path d="M14.800 14l2.300-1.500v8" fill="none" stroke="#fff" stroke-width="1.800"/></svg>
<div class="b" style="left:1361px;top:728px;width:1px;height:40px;background:#3a3c40;"></div>
</body></html>
